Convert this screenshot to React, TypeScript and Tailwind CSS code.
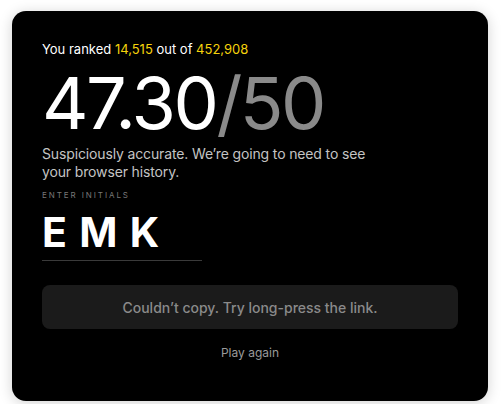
import React from 'react';

const App: React.FC = () => {
  return (
    <div className="min-h-screen bg-white pl-[12px] pt-[11px] font-['Inter',sans-serif]">
      <div className="w-[476px] h-[390px] rounded-[14px] bg-black shadow-[0_2px_14px_rgba(0,0,0,0.18)] px-[30px] pt-[30px] flex flex-col">
        <p className="text-[13px] leading-[16px] text-white">
          You ranked <span className="text-[#f5d20b]">14,515</span> out of{' '}
          <span className="text-[#f5d20b]">452,908</span>
        </p>

        <div className="mt-[10px] text-[72px] leading-[72px] tracking-[-0.035em] text-white">
          47.30<span className="text-[#8a8a8a]">/50</span>
        </div>

        <p className="mt-[6px] max-w-[350px] text-[14px] leading-[18px] tracking-[-0.01em] text-[#c4c4c4]">
          Suspiciously accurate. We’re going to need to see your browser history.
        </p>

        <div className="mt-[9px] text-[8px] leading-[10px] tracking-[0.24em] text-[#777]">ENTER INITIALS</div>

        <div className="mt-[10px] w-[160px] border-b border-[#3a3a3a] pb-[6px]">
          <span className="text-[41px] leading-[44px] font-bold tracking-[0.3em] text-white">EMK</span>
        </div>

        <div className="mt-[24px] h-[44px] rounded-[8px] bg-[#1b1b1b] flex items-center justify-center text-[14px] font-medium text-[#8a8a8a]">
          Couldn’t copy. Try long-press the link.
        </div>

        <div className="mt-[16px] text-center text-[12px] leading-[16px] text-[#9a9a9a]">Play again</div>
      </div>
    </div>
  );
};

export default App;
